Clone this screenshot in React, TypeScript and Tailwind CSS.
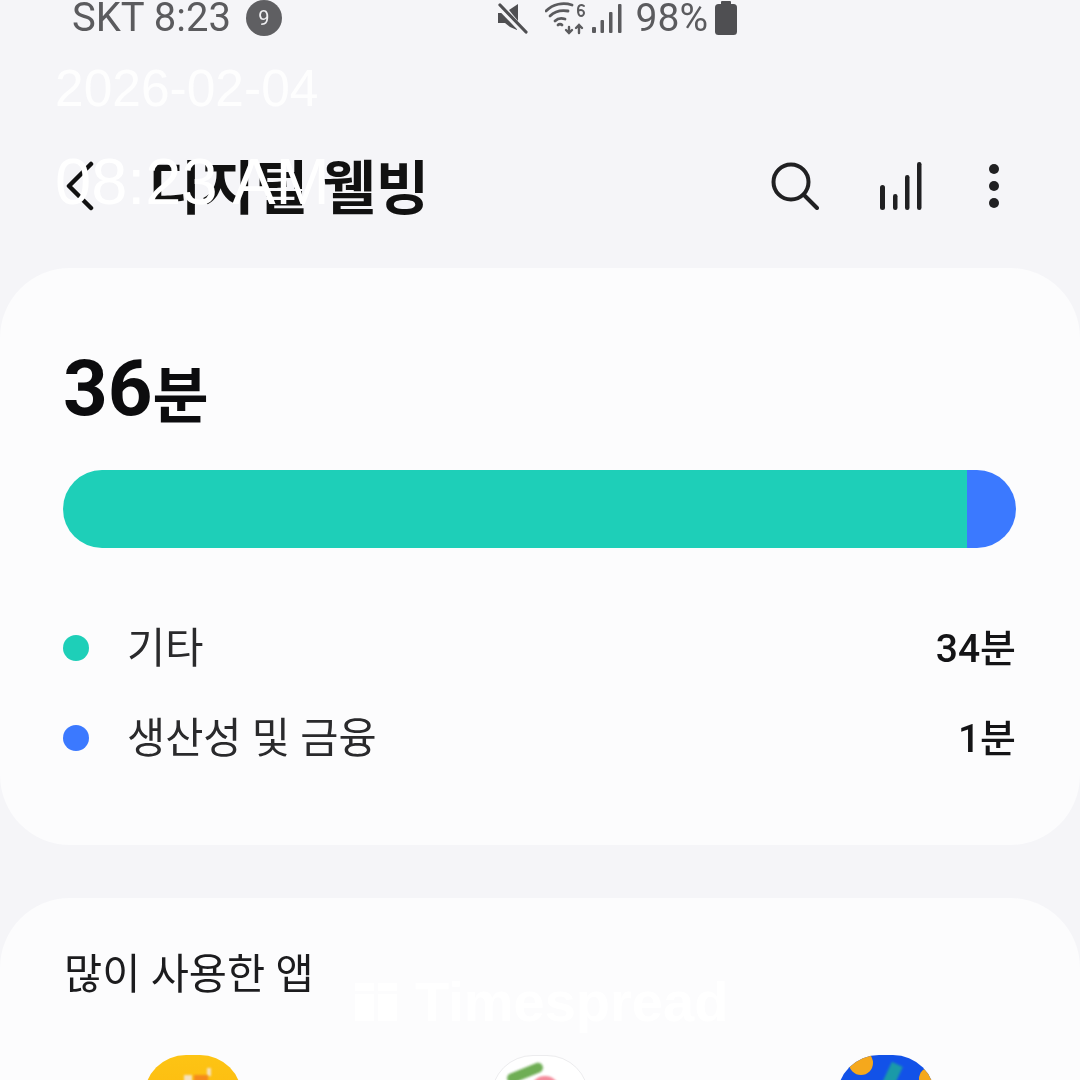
const ko = 'font-["Roboto","Noto_Sans_CJK_KR",sans-serif]'

function MuteIcon() {
  return (
    <svg width="34" height="34" viewBox="0 0 34 34" className="text-[#4f4f52]">
      <path d="M2 12h7l5 4 7 11v2l-7-3-5-4H2z" fill="currentColor" />
      <path d="M13 9l9-6v17z" fill="currentColor" />
      <path d="M4 7l25 26" stroke="#f5f5f8" strokeWidth="5" />
      <path d="M4 4l26 27" stroke="currentColor" strokeWidth="3.2" strokeLinecap="round" />
    </svg>
  )
}

function WifiIcon() {
  return (
    <svg width="42" height="34" viewBox="0 0 42 34" fill="none" stroke="#5b5b5e" strokeWidth="2.8" strokeLinecap="round">
      <path d="M1 10c7-7 17-9 26-6" />
      <path d="M5 15c5-5 12-6 18-5" />
      <path d="M10 20c3-3 7-3 10-2" />
      <path d="M13 24c1-1 3-1 4 0" />
      <path d="M24 26v6M21 29l3 3 3-3" strokeWidth="2.4" />
      <path d="M34 25v7M31 27l3-3 3 3" strokeWidth="2.4" />
      <path d="M39 5c-3-2-6-1-6 4 0 5 1 6 3 6s3-2 3-3-1-3-3-3-3 1-3 2" strokeWidth="2" />
    </svg>
  )
}

function SignalIcon() {
  return (
    <svg width="30" height="30" viewBox="0 0 30 30" fill="#5b5b5e">
      <rect x="0" y="24" width="4" height="6" rx="1" />
      <rect x="8.5" y="17" width="3.5" height="13" rx="1" />
      <rect x="17" y="9" width="3.5" height="21" rx="1" />
      <rect x="26" y="1" width="3.5" height="29" rx="1" />
    </svg>
  )
}

function BatteryIcon() {
  return (
    <svg width="22" height="34" viewBox="0 0 22 34" fill="#4f4f52">
      <rect x="6" y="0" width="10" height="5" rx="1" />
      <rect x="0" y="3" width="22" height="31" rx="3.5" />
    </svg>
  )
}

function BarsIcon() {
  return (
    <svg width="42" height="48" viewBox="0 0 42 48" fill="#202022">
      <rect x="0" y="23" width="5" height="25" rx="2.5" />
      <rect x="13" y="32" width="4.5" height="16" rx="2.2" />
      <rect x="25" y="13" width="4.5" height="35" rx="2.2" />
      <rect x="37" y="0" width="4.5" height="48" rx="2.2" />
    </svg>
  )
}

function SearchIcon() {
  return (
    <svg width="48" height="48" viewBox="0 0 48 48" fill="none" stroke="#202022" strokeWidth="4" strokeLinecap="round">
      <circle cx="20" cy="20" r="17.5" />
      <path d="M33 33l13 13" />
    </svg>
  )
}

function UsageRow({ color, label, value }: { color: string; label: string; value: string }) {
  return (
    <div className="flex h-[90px] items-center">
      <span className={`mr-[38px] h-[26px] w-[26px] rounded-full ${color}`} />
      <span className="flex-1 pt-[2px] text-[41.5px] leading-none text-[#2a2a2c]">{label}</span>
      <span className="pt-[2px] text-[39px] leading-none font-medium text-[#141416]">{value}</span>
    </div>
  )
}

function AppTile({ className, children }: { className: string; children?: React.ReactNode }) {
  return <div className={`relative h-[98px] w-[98px] overflow-hidden rounded-[42px] ${className}`}>{children}</div>
}

export default function App() {
  return (
    <div className={`relative h-[1080px] w-[1080px] overflow-hidden bg-[#f5f5f8] ${ko}`}>
      <div className="blur-[0.6px]">
        {/* Status bar */}
        <div className="flex h-[36px] items-center pl-[72px] pr-[343px] text-[#5b5b5e]">
          <span className="text-[40px] leading-[28px] whitespace-nowrap">SKT 8:23</span>
          <span className="ml-[15px] flex h-9 w-9 items-center justify-center rounded-full bg-[#5f5f62] text-[20px] text-[#f0f0f2]">9</span>
          <div className="ml-auto flex items-center">
            <MuteIcon />
            <div className="ml-[15px]"><WifiIcon /></div>
            <div className="ml-[5px]"><SignalIcon /></div>
            <span className="ml-[14px] text-[39px] leading-[28px] whitespace-nowrap">98%</span>
            <div className="ml-[7px]"><BatteryIcon /></div>
          </div>
        </div>

        {/* Header */}
        <div className="flex h-[232px] items-center pl-[66px] pr-[81px] pt-[68px]">
          <svg width="28" height="50" viewBox="0 0 28 50" fill="none" stroke="#111" strokeWidth="4.5" strokeLinecap="round" strokeLinejoin="round">
            <path d="M25 3L3 25l22 22" />
          </svg>
          <h1 className="ml-[54px] mt-[5px] text-[58px] leading-none font-bold whitespace-nowrap text-[#111]">디지털 웰빙</h1>
          <div className="ml-auto flex items-center">
            <SearchIcon />
            <div className="ml-[61px]"><BarsIcon /></div>
            <div className="ml-[67px] flex flex-col gap-[7px]">
              <span className="h-[10px] w-[10px] rounded-full bg-[#202022]" />
              <span className="h-[10px] w-[10px] rounded-full bg-[#202022]" />
              <span className="h-[10px] w-[10px] rounded-full bg-[#202022]" />
            </div>
          </div>
        </div>

        {/* Usage card */}
        <div className="h-[577px] rounded-[70px] bg-[#fcfcfd] pl-[63px] pr-[64px] pt-[80px]">
          <div className="flex h-[80px] items-end font-bold leading-none text-[#0c0c0e]">
            <span className="text-[78px] leading-none">36</span>
            <span className="text-[61px] leading-none">분</span>
          </div>
          <div className="mt-[42px] flex h-[78px] overflow-hidden rounded-full">
            <div className="w-[904px] bg-[#1ecfb8]" />
            <div className="flex-1 bg-[#3b79ff]" />
          </div>
          <div className="mt-[55px]">
            <UsageRow color="bg-[#1ecfb8]" label="기타" value="34분" />
            <UsageRow color="bg-[#3b79ff]" label="생산성 및 금융" value="1분" />
          </div>
        </div>

        {/* Most used apps */}
        <div className="mt-[53px] h-[400px] rounded-[70px] bg-[#fcfcfd] pl-[64px] pt-[52px]">
          <h2 className="text-[41.5px] leading-[50px] text-[#1c1c1e]">많이 사용한 앱</h2>
          <div className="mt-[55px] flex pl-[80px]">
            <AppTile className="bg-gradient-to-b from-[#fdc414] to-[#fdb20a]">
              <span className="absolute left-[63px] top-[13px] h-[8px] w-[4px] bg-[#f6e2c0] blur-[1px]" />
              <span className="absolute left-[40px] top-[20px] h-[20px] w-[8px] bg-[#f6e2c0] blur-[1px]" />
              <span className="absolute left-[50px] top-[20px] h-[20px] w-[14px] bg-[#f58a1c] blur-[1px]" />
            </AppTile>
            <AppTile className="ml-[249px] border border-[#ececee] bg-white">
              <span className="absolute left-[14px] top-[12px] h-[10px] w-[38px] -rotate-[22deg] rounded-full bg-[#6fae55] blur-[1px]" />
              <span className="absolute left-[38px] top-[20px] h-[30px] w-[30px] rounded-full bg-[#f48c9c] blur-[1px]" />
            </AppTile>
            <AppTile className="ml-[248px] bg-[#1252e8]">
              <span className="absolute left-[12px] top-[-4px] h-[24px] w-[24px] rounded-full bg-[#f5a81c] blur-[0.5px]" />
              <span className="absolute left-[82px] top-[12px] h-[24px] w-[24px] rounded-full bg-[#f5a81c] blur-[0.5px]" />
              <span className="absolute left-[48px] top-[8px] h-[30px] w-[12px] rotate-[25deg] bg-[#1a9aa8] blur-[1px]" />
            </AppTile>
          </div>
        </div>
      </div>

      {/* Overlays stamped over the capture */}
      <div className='absolute left-[55px] top-[60px] font-["Liberation_Sans",sans-serif] text-white'>
        <div className="text-[51.5px] leading-[56px] opacity-90 whitespace-nowrap">2026-02-04</div>
        <div className="mt-[30px] text-[65px] leading-[72px] whitespace-nowrap">08:23 AM</div>
      </div>
      <div className='absolute left-[355px] top-[972px] flex items-center gap-[18px] font-["Liberation_Sans",sans-serif] text-[56px] leading-[60px] font-bold whitespace-nowrap text-white'>
        <span className="flex h-[38px] w-[42px] gap-[4px]">
          <span className="flex flex-1 flex-col gap-[3px]">
            <span className="h-[8px] bg-white" />
            <span className="flex-1 bg-white" />
          </span>
          <span className="flex flex-1 flex-col gap-[3px]">
            <span className="h-[8px] bg-white" />
            <span className="flex-1 bg-white" />
          </span>
        </span>
        Timespread
      </div>
    </div>
  )
}
